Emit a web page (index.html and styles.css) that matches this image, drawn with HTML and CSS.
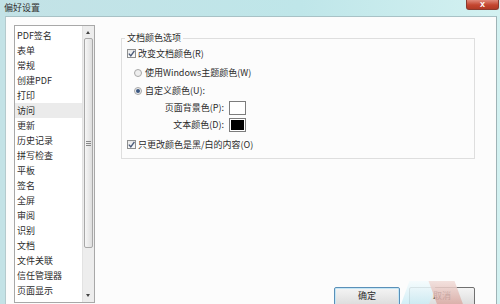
FILE: index.html
```html
<!DOCTYPE html>
<html lang="zh-CN">
<head>
    <meta charset="UTF-8">
    <title>偏好设置</title>
    <link rel="stylesheet" href="styles.css">
</head>
<body>
    <div class="titlebar">
        <span class="title">偏好设置</span>
        <span class="close">x</span>
    </div>

    <div class="window">
        <!-- category list -->
        <div class="list">
            <ul class="items">
                <li>PDF签名</li>
                <li>表单</li>
                <li>常规</li>
                <li>创建PDF</li>
                <li>打印</li>
                <li class="selected">访问</li>
                <li>更新</li>
                <li>历史记录</li>
                <li>拼写检查</li>
                <li>平板</li>
                <li>签名</li>
                <li>全屏</li>
                <li>审阅</li>
                <li>识别</li>
                <li>文档</li>
                <li>文件关联</li>
                <li>信任管理器</li>
                <li>页面显示</li>
            </ul>
            <div class="scrollbar">
                <div class="arrow up"></div>
                <div class="thumb"><span class="grip"></span></div>
                <div class="track"></div>
                <div class="arrow down"></div>
            </div>
        </div>

        <!-- settings panel -->
        <div class="main">
            <fieldset class="group">
                <legend>文档颜色选项</legend>
                <label class="row check">
                    <span class="box"><svg width="9" height="9" viewBox="0 0 9 9"><polyline points="1.8,4.6 3.8,6.8 7.4,1.8" fill="none" stroke="#4b5b7a" stroke-width="1.4"/></svg></span>
                    改变文档颜色(R)
                </label>
                <label class="row radio">
                    <span class="dot"></span>
                    使用Windows主题颜色(W)
                </label>
                <label class="row radio on">
                    <span class="dot"></span>
                    自定义颜色(U):
                </label>
                <div class="colors">
                    <span class="clabel">页面背景色(P):</span>
                    <span class="swatch white"></span>
                    <span class="clabel">文本颜色(D):</span>
                    <span class="swatch black"></span>
                </div>
                <label class="row check last">
                    <span class="box"><svg width="9" height="9" viewBox="0 0 9 9"><polyline points="1.8,4.6 3.8,6.8 7.4,1.8" fill="none" stroke="#4b5b7a" stroke-width="1.4"/></svg></span>
                    只更改颜色是黑/白的内容(O)
                </label>
            </fieldset>

            <div class="buttons">
                <button class="btn default">确定</button>
                <button class="btn">取消</button>
            </div>
        </div>

        <!-- faint watermark over the buttons -->
        <div class="watermark">
            <span class="wm-blue"></span>
            <span class="wm-red"></span>
        </div>
    </div>
</body>
</html>
```

FILE: styles.css
```css
html, body {
    margin: 0;
    padding: 0;
    height: 304px;
    overflow: hidden;
}

body {
    font-family: "Noto Sans CJK SC", "Noto Sans", sans-serif;
    font-size: 9px;
    color: #2c2c2c;
    background: linear-gradient(to right, #c3e2e6, #bfe6e9 60%, #d3f1f1);
}

.titlebar {
    height: 16px;
    display: flex;
    justify-content: space-between;
    align-items: flex-start;
    padding-left: 4px;
    padding-right: 1px;
}

.title {
    line-height: 16px;
    color: #333;
}

.close {
    width: 33px;
    height: 10px;
    line-height: 8px;
    text-align: center;
    color: #fff;
    font-weight: bold;
    font-family: "Liberation Sans", sans-serif;
    font-size: 9px;
    background: linear-gradient(#e0897a, #c44630 55%, #b13a25);
    border: 1px solid #8a3a2e;
    border-top: none;
    border-radius: 0 0 3px 3px;
    box-sizing: border-box;
}

.window {
    position: relative;
    display: flex;
    margin-left: 5px;
    margin-right: 3px;
    height: 300px;
    background: #fcfcfc;
    border-top: 1px solid #a8c2c6;
    border-left: 1px solid #b4cacd;
    border-right: 1px solid #9fb3b6;
}

/* list */
.list {
    display: flex;
    margin: 8px 0 0 8px;
    width: 92px;
    height: 278px;
    box-sizing: border-box;
    border: 1px solid #a8a8a8;
    background: #fff;
}

.items {
    list-style: none;
    margin: 0;
    padding: 2px 0 0 0;
    flex: 1;
}

.items li {
    height: 15px;
    line-height: 15px;
    padding-left: 2px;
    white-space: nowrap;
}

.items li.selected {
    background: #ebebeb;
}

.scrollbar {
    width: 11px;
    display: flex;
    flex-direction: column;
    background: #ededed;
    border-left: 1px solid #e2e2e2;
}

.arrow {
    height: 12px;
    position: relative;
}

.arrow.down {
    height: 14px;
}

.arrow::after {
    content: "";
    position: absolute;
    left: 3px;
    top: 5px;
    border-left: 2px solid transparent;
    border-right: 2px solid transparent;
}

.arrow.up::after {
    border-bottom: 3px solid #444;
}

.arrow.down::after {
    border-top: 3px solid #444;
    top: 6px;
}

.thumb {
    height: 210px;
    margin: 0 1px;
    box-sizing: border-box;
    border: 1px solid #a8a8a8;
    border-radius: 2px;
    background: linear-gradient(to right, #f6f6f6, #dedede);
    display: flex;
    align-items: center;
    justify-content: center;
}

.grip {
    width: 5px;
    height: 5px;
    background: repeating-linear-gradient(#888 0 1px, transparent 1px 2px);
}

.track {
    flex: 1;
}

/* panel */
.main {
    margin-left: 26px;
    margin-right: 21px;
    flex: 1;
}

.group {
    margin: 15px 0 0 0;
    padding: 0 5px 3px 5px;
    border: 1px solid #dedede;
    min-width: 0;
}

.group legend {
    padding: 0 2px;
    margin-left: -2px;
    line-height: 12px;
}

.row {
    display: flex;
    align-items: center;
    height: 19px;
    white-space: nowrap;
}

.row.last {
    height: 22px;
}

.box {
    width: 9px;
    height: 9px;
    box-sizing: border-box;
    border: 1px solid #8e8f8f;
    background: linear-gradient(#e9e9e9, #fafafa);
    margin-right: 2px;
    display: flex;
}

.box svg {
    margin: -1px;
}

.radio {
    padding-left: 7px;
}

.radio.on {
    height: 17px;
}

.dot {
    width: 8px;
    height: 8px;
    box-sizing: border-box;
    border-radius: 50%;
    border: 1px solid #a8a8a8;
    background: #eeeeee;
    margin-right: 3px;
    position: relative;
}

.radio.on .dot::after {
    content: "";
    position: absolute;
    left: 1px;
    top: 1px;
    width: 4px;
    height: 4px;
    border-radius: 50%;
    background: #3a5680;
}

.colors {
    display: grid;
    grid-template-columns: 97px 17px;
    grid-template-rows: 17px 17px;
    column-gap: 5px;
    align-items: center;
}

.clabel {
    text-align: right;
    white-space: nowrap;
}

.swatch {
    width: 17px;
    height: 14px;
    box-sizing: border-box;
    border: 1px solid #7c7c7c;
}

.swatch.white {
    background: #fff;
}

.swatch.black {
    background: #000;
    box-shadow: inset 0 0 0 1px #fff;
}

.buttons {
    display: flex;
    margin-top: 128px;
    margin-left: 213px;
    gap: 9px;
}

.btn {
    width: 66px;
    height: 22px;
    padding: 0 0 6px 0;
    font-family: inherit;
    font-size: 9px;
    color: #2c2c2c;
    border: 1px solid #707070;
    border-radius: 2px;
    background: linear-gradient(#f4f4f4, #e8e8e8 45%, #d8d8d8);
}

.btn.default {
    border-color: #5a90b8;
    box-shadow: inset 0 0 0 1px #c4e6f6;
}

.watermark {
    position: absolute;
    left: 390px;
    top: 262px;
    width: 80px;
    height: 30px;
    pointer-events: none;
}

.wm-blue {
    position: absolute;
    left: 8px;
    top: 2px;
    width: 28px;
    height: 30px;
    background: linear-gradient(#f4fbfd, #bfe8f3);
    transform: skewX(-20deg);
    opacity: 0.85;
}

.wm-red {
    position: absolute;
    left: 38px;
    top: 2px;
    width: 26px;
    height: 30px;
    background: linear-gradient(#f1dcd8, #d39a92);
    transform: skewX(20deg);
    opacity: 0.85;
}
```
